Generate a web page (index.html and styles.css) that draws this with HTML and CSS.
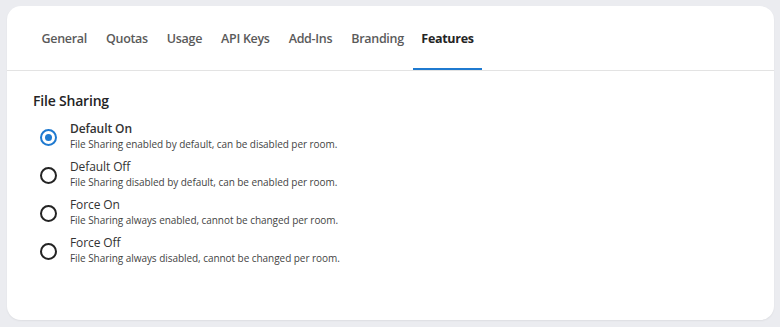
FILE: index.html
```html
<!DOCTYPE html>
<html lang="en">
<head>
    <meta charset="UTF-8">
    <title>Settings - Features</title>
    <link rel="stylesheet" href="styles.css">
</head>
<body>
    <div class="card">
        <nav class="tabs">
            <a class="tab">General</a>
            <a class="tab">Quotas</a>
            <a class="tab">Usage</a>
            <a class="tab">API Keys</a>
            <a class="tab">Add-Ins</a>
            <a class="tab">Branding</a>
            <a class="tab active">Features</a>
        </nav>

        <div class="content">
            <h2>File Sharing</h2>
            <div class="options">
                <label class="option">
                    <span class="radio checked"></span>
                    <span class="text">
                        <span class="name strong">Default On</span>
                        <span class="desc">File Sharing enabled by default, can be disabled per room.</span>
                    </span>
                </label>
                <label class="option">
                    <span class="radio"></span>
                    <span class="text">
                        <span class="name">Default Off</span>
                        <span class="desc">File Sharing disabled by default, can be enabled per room.</span>
                    </span>
                </label>
                <label class="option">
                    <span class="radio"></span>
                    <span class="text">
                        <span class="name">Force On</span>
                        <span class="desc">File Sharing always enabled, cannot be changed per room.</span>
                    </span>
                </label>
                <label class="option">
                    <span class="radio"></span>
                    <span class="text">
                        <span class="name">Force Off</span>
                        <span class="desc">File Sharing always disabled, cannot be changed per room.</span>
                    </span>
                </label>
            </div>
        </div>
    </div>
</body>
</html>
```

FILE: styles.css
```css
/* Global styles */
body {
    margin: 0;
    padding: 6px 6px 7px 7px;
    background-color: #ebecf0;
    font-family: "Open Sans", "Noto Sans", sans-serif;
    color: #242424;
}

.card {
    background-color: #ffffff;
    border-radius: 14px;
    height: 314px;
    box-shadow: 0 1px 2px rgba(0, 0, 0, 0.06);
    overflow: hidden;
}

/* Tabs */
.tabs {
    display: flex;
    padding: 0 25px;
    height: 64px;
    border-bottom: 1px solid #e3e3e3;
}

.tab {
    display: flex;
    align-items: center;
    padding: 2px 9.5px 0;
    font-size: 12.5px;
    font-weight: 600;
    color: #5a5a5a;
    border-bottom: 2px solid transparent;
    letter-spacing: -0.3px;
}

.tab.active {
    color: #242424;
    font-weight: 700;
    border-bottom-color: #1f7ad0;
    padding: 2px 8px 0;
}

/* Content */
.content {
    padding: 20px 26px;
}

h2 {
    margin: 0 0 13px;
    font-size: 14px;
    font-weight: 600;
    letter-spacing: -0.2px;
}

.options {
    display: flex;
    flex-direction: column;
    gap: 10px;
}

.option {
    display: flex;
    align-items: center;
    gap: 13px;
    padding-left: 7px;
}

.radio {
    width: 13px;
    height: 13px;
    border: 2px solid #242424;
    border-radius: 50%;
    flex-shrink: 0;
    display: flex;
    align-items: center;
    justify-content: center;
    margin-top: 1px;
}

.radio.checked {
    border-color: #1f7ad0;
}

.radio.checked::after {
    content: "";
    width: 7px;
    height: 7px;
    border-radius: 50%;
    background-color: #1f7ad0;
}

.text {
    display: flex;
    flex-direction: column;
    margin-top: -2px;
}

.name {
    font-size: 12px;
    line-height: 16px;
    color: #333;
    letter-spacing: -0.1px;
}

.name.strong {
    font-weight: 600;
}

.desc {
    font-size: 10px;
    line-height: 14px;
    color: #444;
    letter-spacing: -0.05px;
}
```
